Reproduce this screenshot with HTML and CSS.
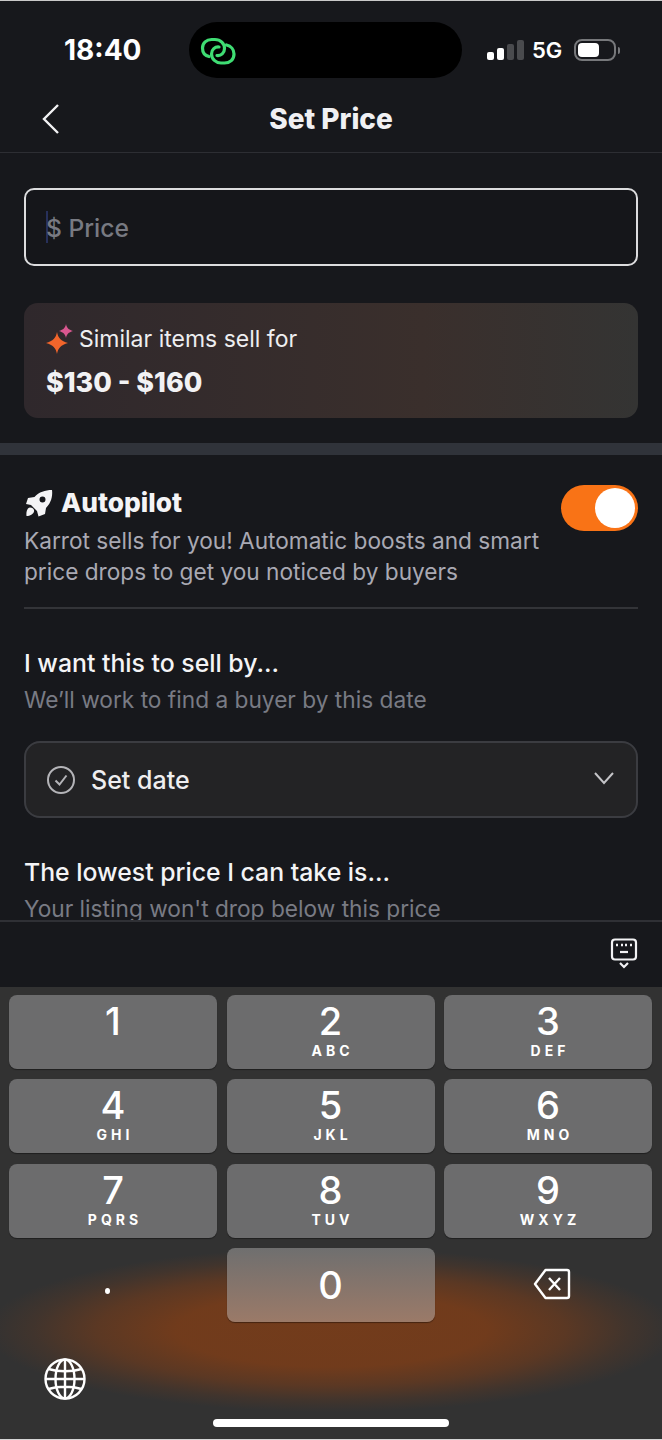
FILE: index.html
```html
<!DOCTYPE html>
<html lang="en">
<head>
    <meta charset="UTF-8">
    <meta name="viewport" content="width=device-width, initial-scale=1.0">
    <title>Set Price</title>
    <link rel="stylesheet" href="styles.css">
</head>
<body>
    <div class="phone">
        <div class="status-bar">
            <span class="time">18:40</span>
            <div class="island">
                <svg class="link-icon" width="38" height="30" viewBox="0 0 38 30" fill="none" stroke="#3fdc73" stroke-width="3.2" stroke-linecap="round">
                    <path d="M10 20.5C5.5 19.5 3.5 16 3.5 12C3.5 7 7.5 3.5 12.5 3.5H16C21.5 3.5 25.5 7.5 25.5 12.5C25.5 17 22 20 18 19.5"/>
                    <path d="M27.5 9C32 10 35 13.5 35 18C35 23.5 31 27 25.5 27H22C17 27 12.500 23 12.500 18C12.500 13.500 16 10.500 20 11"/>
                </svg>
            </div>
            <div class="status-icons">
                <div class="signal">
                    <span class="bar bar-1"></span>
                    <span class="bar bar-2"></span>
                    <span class="bar bar-3"></span>
                    <span class="bar bar-4"></span>
                </div>
                <span class="network">5G</span>
                <div class="battery"><div class="battery-level"></div></div>
                <div class="battery-cap"></div>
            </div>
        </div>

        <div class="nav-bar">
            <svg class="back-icon" width="20" height="32" viewBox="0 0 20 32" fill="none" stroke="#f2f2f4" stroke-width="2.4">
                <path d="M17 2L3 16L17 30"/>
            </svg>
            <h1 class="nav-title">Set Price</h1>
        </div>

        <div class="content">
            <div class="price-section">
                <div class="price-input">
                    <span class="cursor"></span>
                    <span class="placeholder">$ Price</span>
                </div>
                <div class="similar-card">
                    <div class="similar-label">
                        <svg width="30" height="32" viewBox="0 0 30 32">
                            <path fill="#f2652b" d="M11 9C12 15 15 18 22 20C15 22 12 25 11 31C10 25 7 22 0 20C7 18 10 15 11 9Z"/>
                            <path fill="#d9578f" d="M20 1C20.800 5 22.500 6.500 27 8C22.500 9.500 20.800 11 20 15C19.200 11 17.500 9.500 13 8C17.500 6.500 19.200 5 20 1Z"/>
                        </svg>
                        <span>Similar items sell for</span>
                    </div>
                    <div class="similar-range">$130 - $160</div>
                </div>
            </div>

            <div class="section-divider"></div>

            <div class="autopilot">
                <div class="autopilot-head">
                    <div class="autopilot-text">
                        <div class="autopilot-title">
                            <svg width="28" height="28" viewBox="0 0 28 28">
                                <path fill="#f4f4f6" fill-rule="evenodd" d="M27 1C28 9 25 15 21 19L20 25L13.500 27.500L12 22L6 16L1 15L3 9L9.500 8C14 3 20 1 27 1ZM17.500 7.500A3 3 0 1 0 17.500 13.500A3 3 0 1 0 17.500 7.500Z"/>
                                <path fill="#f4f4f6" d="M5 18.500C8 18.500 9.500 20.500 9 22.500C8.500 25 5 27 1.500 27C1 23 2 19 5 18.500Z"/>
                            </svg>
                            <span>Autopilot</span>
                        </div>
                        <p class="autopilot-desc">Karrot sells for you! Automatic boosts and smart price drops to get you noticed by buyers</p>
                    </div>
                    <div class="toggle"><div class="toggle-knob"></div></div>
                </div>
                <div class="thin-line"></div>

                <h2 class="field-title">I want this to sell by...</h2>
                <p class="field-sub">We’ll work to find a buyer by this date</p>
                <div class="date-select">
                    <svg width="30" height="30" viewBox="0 0 30 30" fill="none" stroke="#b4b4b8" stroke-width="2">
                        <circle cx="15" cy="15" r="13"/>
                        <path d="M9.500 15.500L13.500 19.500L20.500 10.500"/>
                    </svg>
                    <span class="date-text">Set date</span>
                    <svg class="chevron" width="22" height="14" viewBox="0 0 22 14" fill="none" stroke="#c4c4c8" stroke-width="2">
                        <path d="M2 2L11 12L20 2"/>
                    </svg>
                </div>

                <h2 class="field-title lowest">The lowest price I can take is...</h2>
                <p class="field-sub">Your listing won't drop below this price</p>
            </div>
        </div>

        <div class="kb-toolbar">
            <svg width="28" height="32" viewBox="0 0 28 32" fill="none" stroke="#f2f2f4">
                <rect x="2" y="1.500" width="24" height="20" rx="3" stroke-width="2.200"/>
                <path d="M6 7H8M11 7H13M15 7H17M20 7H22" stroke-width="2.600"/>
                <path d="M10 14H18" stroke-width="2.200"/>
                <path d="M10 25L14 29L18 25" stroke-width="2.200"/>
            </svg>
        </div>

        <div class="keyboard">
            <div class="keys">
                <div class="key"><span class="digit">1</span><span class="letters"></span></div>
                <div class="key"><span class="digit">2</span><span class="letters">ABC</span></div>
                <div class="key"><span class="digit">3</span><span class="letters">DEF</span></div>
                <div class="key"><span class="digit">4</span><span class="letters">GHI</span></div>
                <div class="key"><span class="digit">5</span><span class="letters">JKL</span></div>
                <div class="key"><span class="digit">6</span><span class="letters">MNO</span></div>
                <div class="key"><span class="digit">7</span><span class="letters">PQRS</span></div>
                <div class="key"><span class="digit">8</span><span class="letters">TUV</span></div>
                <div class="key"><span class="digit">9</span><span class="letters">WXYZ</span></div>
                <div class="key-plain"><span class="dot"></span></div>
                <div class="key key-zero"><span class="digit">0</span></div>
                <div class="key-plain">
                    <svg class="backspace" width="38" height="32" viewBox="0 0 38 32" fill="none" stroke="#fff" stroke-width="2.400" stroke-linejoin="round">
                        <path d="M12.500 2H34C35.500 2 36 2.500 36 4V28C36 29.500 35.500 30 34 30H12.500L2 16Z"/>
                        <path d="M16 10L27 22M27 10L16 22"/>
                    </svg>
                </div>
            </div>
            <div class="globe-row">
                <svg width="42" height="42" viewBox="0 0 42 42" fill="none" stroke="#fff" stroke-width="2.400">
                    <circle cx="21" cy="21" r="19.500"/>
                    <ellipse cx="21" cy="21" rx="9.500" ry="19.500"/>
                    <path d="M21 1.500V40.500M1.500 21H40.500M4.500 11C14 14 28 14 37.500 11M4.500 31C14 28 28 28 37.500 31"/>
                </svg>
            </div>
            <div class="home-indicator"></div>
        </div>
    </div>
</body>
</html>
```

FILE: styles.css
```css
* {
    box-sizing: border-box;
}

body {
    margin: 0;
    font-family: Inter, "Noto Sans", sans-serif;
    background: #17181c;
    color: #f4f4f6;
}

.phone {
    width: 662px;
    height: 1440px;
    display: flex;
    flex-direction: column;
    overflow: hidden;
    background: #17181c;
    border-top: 1px solid #c9c9c9;
}

/* status bar */
.status-bar {
    height: 89px;
    padding: 21px 0 0 64px;
    display: flex;
    align-items: flex-start;
    flex-shrink: 0;
}

.time {
    width: 125px;
    margin-top: 12px;
    font-size: 28px;
    line-height: 32px;
    font-weight: 700;
    color: #fff;
    flex-shrink: 0;
}

.island {
    width: 273px;
    height: 56px;
    border-radius: 28px;
    background: #000;
    padding: 14px 0 0 10px;
    flex-shrink: 0;
}

.link-icon {
    display: block;
}

.status-icons {
    margin: 15px 0 0 25px;
    display: flex;
    align-items: center;
}

.signal {
    display: flex;
    align-items: flex-end;
    gap: 3px;
    height: 20px;
}

.bar {
    width: 7px;
    border-radius: 2px;
    background: #fff;
}

.bar-1 {
    height: 8px;
}

.bar-2 {
    height: 12px;
}

.bar-3 {
    height: 16px;
    background: #4a4b4e;
}

.bar-4 {
    height: 20px;
    background: #4a4b4e;
}

.network {
    margin-left: 8px;
    font-size: 22px;
    font-weight: 600;
    color: #fff;
}

.battery {
    margin-left: 12px;
    width: 42px;
    height: 22px;
    border: 2px solid #77787b;
    border-radius: 8px;
    padding: 2px;
}

.battery-level {
    width: 21px;
    height: 14px;
    border-radius: 4px;
    background: #fff;
}

.battery-cap {
    margin-left: 2px;
    width: 2px;
    height: 7px;
    border-radius: 0 2px 2px 0;
    background: #77787b;
}

/* nav */
.nav-bar {
    height: 63px;
    display: flex;
    align-items: center;
    justify-content: center;
    position: relative;
    border-bottom: 1px solid #2d2e33;
    flex-shrink: 0;
}

.back-icon {
    position: absolute;
    left: 41px;
    top: 13px;
}

.nav-title {
    margin: 0 0 5px;
    font-size: 28px;
    font-weight: 800;
    color: #f0f0f3;
}

/* content */
.content {
    height: 767px;
    overflow: hidden;
    flex-shrink: 0;
}

.price-section {
    padding: 35px 24px 25px;
}

.price-input {
    height: 78px;
    border: 2px solid #dcdcde;
    border-radius: 10px;
    background: #15161a;
    display: flex;
    align-items: center;
    padding-left: 20px;
}

.cursor {
    width: 2px;
    height: 32px;
    background: #27305a;
}

.placeholder {
    margin-left: -2px;
    padding-top: 2px;
    font-size: 24.600px;
    font-weight: 500;
    color: #787a82;
}

.similar-card {
    margin-top: 37px;
    height: 115px;
    border-radius: 14px;
    background: linear-gradient(90deg, #2f282c, #3a2f2c 65%, #343433);
    padding: 20px 22px 0;
}

.similar-label {
    display: flex;
    align-items: center;
    gap: 3px;
    font-size: 23px;
    line-height: 32px;
    color: #eeeef0;
}

.similar-range {
    margin-top: 9px;
    font-size: 26.900px;
    line-height: 36px;
    font-weight: 800;
    color: #f2f2f4;
}

.section-divider {
    height: 12px;
    background: #30333a;
}

/* autopilot */
.autopilot {
    padding: 30px 24px 0 24px;
}

.autopilot-head {
    display: flex;
    justify-content: space-between;
    align-items: flex-start;
}

.autopilot-title {
    display: flex;
    align-items: center;
    gap: 8px;
    font-size: 26.300px;
    line-height: 36px;
    font-weight: 800;
    color: #f4f4f6;
}

.autopilot-title svg {
    margin-left: 1px;
}

.autopilot-desc {
    margin: 4px 0 0;
    width: 530px;
    font-size: 22.650px;
    line-height: 31px;
    color: #a9a9b3;
}

.toggle {
    width: 77px;
    height: 46px;
    border-radius: 23px;
    background: #f97316;
    padding: 3px 3px 3px 34px;
    flex-shrink: 0;
}

.toggle-knob {
    width: 40px;
    height: 40px;
    border-radius: 50%;
    background: #fff;
}

.thin-line {
    margin-top: 20px;
    height: 2px;
    background: #333438;
}

.field-title {
    margin: 36px 0 0;
    font-size: 24.800px;
    line-height: 36px;
    font-weight: 500;
    color: #f4f4f6;
}

.field-title.lowest {
    margin-top: 36px;
}

.field-sub {
    margin: 0;
    padding-top: 2px;
    font-size: 22.700px;
    line-height: 34px;
    color: #797b84;
}

.date-select {
    margin-top: 24px;
    height: 77px;
    border: 2px solid #3b3c41;
    border-radius: 16px;
    background: #232325;
    display: flex;
    align-items: center;
    padding: 0 21px 0 20px;
}

.date-text {
    margin-left: 15px;
    font-size: 25px;
    font-weight: 500;
    color: #eeeef0;
}

.chevron {
    margin-left: auto;
    margin-bottom: 4px;
}

/* keyboard */
.kb-toolbar {
    height: 67px;
    border-top: 2px solid #2f3035;
    display: flex;
    justify-content: flex-end;
    padding: 16px 24px 0 0;
    flex-shrink: 0;
}

.keyboard {
    flex: 1;
    display: flex;
    flex-direction: column;
    background:
        radial-gradient(ellipse 345px 82px at 50% 343px,
            rgba(118, 60, 26, 0.95) 0%,
            rgba(118, 60, 26, 0.92) 45%,
            rgba(118, 60, 26, 0.6) 68%,
            rgba(118, 60, 26, 0.22) 86%,
            rgba(118, 60, 26, 0) 100%),
        #323232;
    border-bottom: 1px solid #d5d5d5;
}

.keys {
    display: grid;
    grid-template-columns: repeat(3, 208px);
    grid-auto-rows: 74px;
    column-gap: 9.500px;
    row-gap: 10.300px;
    padding: 8px 0 0 9px;
}

.key {
    display: flex;
    flex-direction: column;
    align-items: center;
    border-radius: 8px;
    background: #6c6c6d;
    box-shadow: 0 1px 1px rgba(0, 0, 0, 0.4);
    color: #fff;
}

.digit {
    font-size: 38px;
    font-weight: 500;
    line-height: 44px;
    margin-top: 4px;
}

.letters {
    font-size: 14px;
    line-height: 16px;
    font-weight: 700;
    letter-spacing: 4px;
    margin-right: -4px;
}

.key-zero {
    justify-content: center;
    background: linear-gradient(180deg, #6f6f6f, #9b7a68);
}

.key-zero .digit {
    margin-top: 0;
}

.key-plain {
    display: flex;
    align-items: center;
    justify-content: center;
}

.dot {
    width: 5px;
    height: 6px;
    margin-top: 13px;
    margin-right: 11px;
    border-radius: 50%;
    background: #fff;
}

.backspace {
    margin-left: 8px;
    margin-top: -1px;
}

.globe-row {
    padding: 36px 0 0 44px;
}

.globe-row svg {
    display: block;
}

.home-indicator {
    width: 236px;
    height: 8px;
    margin: 19px auto 0;
    border-radius: 4px;
    background: #fff;
}
```
